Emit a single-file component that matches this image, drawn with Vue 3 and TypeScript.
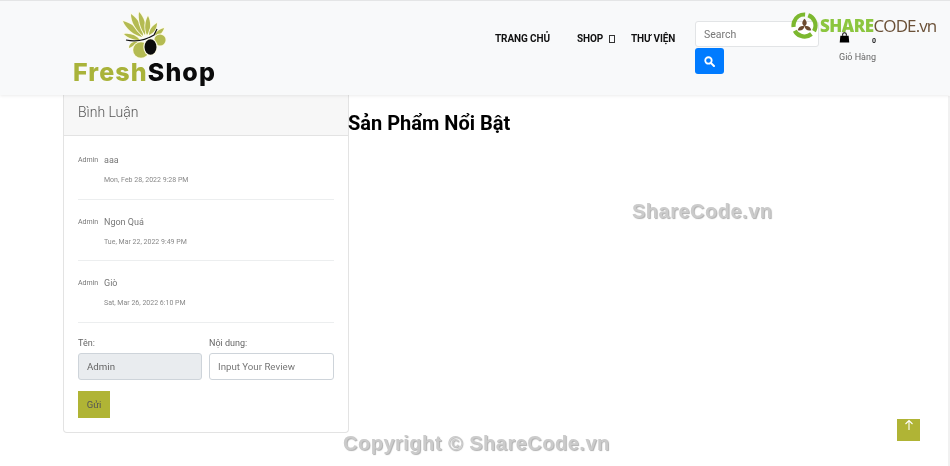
<template>
  <div class="page">
    <header class="top">
      <a class="brand">
        <svg class="brand-mark" viewBox="0 0 52 50" width="52" height="50">
          <g fill="#b4bb52" stroke="#fdfbe6" stroke-width="1.8" paint-order="stroke">
            <path d="M24 27 C16 25 8 19 5 11 C13 13 21 19 24 27 Z" />
            <path d="M25 26 C18 20 13 12 13 4 C20 9 25 17 25 26 Z" />
            <path d="M27 25 C22 18 20 9 21 2 C26 7 29 16 27 25 Z" />
            <path d="M29 25 C26 19 27 11 30 6 C33 12 33 20 29 25 Z" />
            <path d="M31 25 C31 20 34 16 39 13 C39 18 36 23 31 25 Z" />
            <path d="M22 30 C16 30 10 28 6 24 C12 23 18 25 22 30 Z" />
            <path d="M20 33 C17 34 14 37 11 38 C11 34 15 31 20 32 Z" />
            <path d="M37 24 C39 21 42 19 46 18 C45 22 42 25 38 26 Z" />
            <circle cx="42" cy="30" r="5.6" />
            <circle cx="23" cy="40" r="7.8" />
          </g>
          <path d="M8 30 C18 32 28 30 36 25 C37 23 38 21 39 19" fill="none" stroke="#111" stroke-width="1.2" />
          <ellipse cx="32.5" cy="37" rx="7.2" ry="9" fill="#fdfbe6" />
          <ellipse cx="32.5" cy="37" rx="6" ry="7.8" fill="#0c0c0c" />
        </svg>
        <span class="brand-name"><span class="fresh">Fresh</span>Shop</span>
      </a>
      <nav class="nav">
        <a class="nav-link home">TRANG CHỦ</a>
        <a class="nav-link shop">SHOP<i class="tofu"></i></a>
        <a class="nav-link lib">THƯ VIỆN</a>
      </nav>
      <form class="search" @submit.prevent>
        <input class="search-input" type="text" placeholder="Search" />
        <button class="search-btn" type="button" aria-label="Search">
          <svg viewBox="0 0 16 16" width="11" height="11">
            <circle cx="6.5" cy="6.5" r="4.7" fill="none" stroke="#fff" stroke-width="2.6" />
            <path d="M10 10 L14.5 14.5" stroke="#fff" stroke-width="3" stroke-linecap="round" />
          </svg>
        </button>
      </form>
      <div class="cart">
        <div class="cart-top">
          <svg viewBox="0 0 12 12" width="11" height="11">
            <path d="M4 4 V2.8 a2 2 0 0 1 4 0 V4" fill="none" stroke="#000" stroke-width="1.1" />
            <path d="M1.5 4 H10.5 L11.2 11.5 H0.8 Z" fill="#000" />
          </svg>
          <span class="cart-count">0</span>
        </div>
        <span class="cart-label">Giỏ Hàng</span>
      </div>
    </header>

    <main class="content">
      <section class="card">
        <div class="card-head">Bình Luận</div>
        <div class="card-body">
          <div v-for="c in comments" :key="c.date" class="comment">
            <span class="author">Admin</span>
            <div class="comment-main">
              <p class="comment-text">{{ c.text }}</p>
              <p class="comment-date">{{ c.date }}</p>
            </div>
          </div>
          <div class="form-row">
            <label class="field name-field">
              <span>Tên:</span>
              <input class="control" type="text" value="Admin" disabled />
            </label>
            <label class="field">
              <span>Nội dung:</span>
              <input class="control" type="text" placeholder="Input Your Review" />
            </label>
          </div>
          <button class="send" type="button">Gửi</button>
        </div>
      </section>
      <h2 class="featured">Sản Phẩm Nổi Bật</h2>
    </main>

    <div class="brand-stamp">
      <svg viewBox="0 0 28 28" width="27" height="27">
        <g fill="none" stroke="#7cb82f" stroke-width="4.4">
          <circle cx="14" cy="14" r="11.4" stroke-dasharray="20 3.9" transform="rotate(-70 14 14)" />
        </g>
        <path d="M14 7 C17 10 17 13 14 15 C11 13 11 10 14 7 Z" fill="#6b4a2f" />
        <path d="M7 19 C8 15 11 14 14 15 C13 18 11 20 7 19 Z" fill="#6b4a2f" />
        <path d="M21 19 C20 15 17 14 14 15 C15 18 17 20 21 19 Z" fill="#6b4a2f" />
      </svg>
      <span class="stamp-text"><b>SHARE</b>CODE.vn</span>
    </div>
    <span class="mark mark-mid">ShareCode.vn</span>
    <span class="mark mark-foot">Copyright © ShareCode.vn</span>
    <a class="to-top">
      <svg viewBox="0 0 12 12" width="12" height="12">
        <path d="M6 11 V1.5 M2.5 5 L6 1.5 L9.5 5" fill="none" stroke="#fff" stroke-width="1.1" />
      </svg>
    </a>
    <div class="scroll-rail"></div>
  </div>
</template>

<script setup lang="ts">
interface Comment {
  text: string;
  date: string;
}

const comments: Comment[] = [
  { text: 'aaa', date: 'Mon, Feb 28, 2022 9:28 PM' },
  { text: 'Ngon Quá', date: 'Tue, Mar 22, 2022 9:49 PM' },
  { text: 'Giò', date: 'Sat, Mar 26, 2022 6:10 PM' }
];
</script>

<style>
html,
body {
  margin: 0;
  background: #fff;
  overflow: hidden;
}
</style>

<style scoped>
.page {
  position: relative;
  width: 950px;
  height: 466px;
  overflow: hidden;
  will-change: transform;
  font-family: "Roboto", "Noto Sans", sans-serif;
  color: #666;
}

.top {
  position: relative;
  z-index: 2;
  box-sizing: border-box;
  height: 95px;
  display: flex;
  align-items: flex-start;
  background: #f8f9fa;
  border-top: 1px solid #e4e5e6;
  box-shadow: 0 1px 3px rgba(0, 0, 0, 0.08);
}

.brand {
  width: 422px;
  margin-left: 73px;
  display: flex;
  flex-direction: column;
  padding-top: 9px;
}

.brand-mark {
  margin-left: 45px;
}

.brand-name {
  font-family: "Inter", "Open Sans", sans-serif;
  font-weight: 800;
  font-size: 25px;
  line-height: 24px;
  letter-spacing: 1.1px;
  color: #0b0b0b;
}

.fresh {
  color: #a9b33a;
}

.nav {
  display: flex;
  padding-top: 31px;
}

.nav-link {
  font-size: 10px;
  line-height: 14px;
  font-weight: 700;
  letter-spacing: -0.1px;
  color: #111;
  white-space: nowrap;
}

.home {
  width: 82px;
}

.shop {
  width: 54px;
  display: flex;
  align-items: center;
}

.lib {
  width: 64px;
}

.tofu {
  box-sizing: border-box;
  width: 6px;
  height: 8px;
  margin-left: 6px;
  border: 1px solid #333;
}

.search {
  width: 124px;
  padding-top: 20px;
  display: flex;
  flex-direction: column;
  align-items: flex-start;
  gap: 1px;
}

.search-input {
  box-sizing: border-box;
  width: 124px;
  height: 26px;
  padding: 0 8px;
  font: 10.5px "Roboto", sans-serif;
  border: 1px solid #e2e4e6;
  border-radius: 3px;
  background: #fff;
  outline: none;
}

.search-input::placeholder {
  color: #777;
}

.search-btn {
  width: 29px;
  height: 26px;
  padding: 0;
  display: flex;
  align-items: center;
  justify-content: center;
  background: #007bff;
  border: 0;
  border-radius: 3px;
}

.cart {
  margin-left: 20px;
  padding-top: 31px;
  width: 37px;
  display: flex;
  flex-direction: column;
}

.cart-top {
  display: flex;
  justify-content: space-between;
  height: 16px;
}

.cart-count {
  font-size: 7px;
  font-weight: 700;
  line-height: 9px;
  padding-top: 5px;
  color: #222;
}

.cart-label {
  margin-top: 2px;
  font-size: 9px;
  line-height: 14px;
  color: #666;
  white-space: nowrap;
}

.content {
  display: flex;
  align-items: flex-start;
  padding-left: 63px;
}

.card {
  box-sizing: border-box;
  width: 286px;
  height: 338px;
  border: 1px solid #e3e3e3;
  border-top: 0;
  border-radius: 0 0 4px 4px;
}

.card-head {
  box-sizing: border-box;
  height: 41px;
  padding: 7px 14px 0;
  background: #f7f7f7;
  border-bottom: 1px solid #e3e3e3;
  font-size: 14px;
  line-height: 20px;
  font-weight: 300;
  color: #555;
}

.card-body {
  padding: 2px 14px 0;
}

.comment {
  box-sizing: border-box;
  height: 61.5px;
  display: flex;
  padding-top: 15px;
  border-bottom: 1px solid #eceeef;
}

.author {
  width: 26px;
  font-size: 7px;
  line-height: 14px;
  color: #777;
}

.comment-main p {
  margin: 0;
}

.comment-text {
  font-size: 9px;
  line-height: 14px;
  color: #777;
}

.comment-date {
  margin-top: 7px !important;
  font-size: 7px;
  line-height: 12px;
  color: #888;
}

.form-row {
  display: flex;
  gap: 7px;
  padding-top: 12px;
}

.field {
  flex: 1;
  min-width: 0;
  display: flex;
  flex-direction: column;
  font-size: 9px;
  line-height: 16px;
  color: #666;
}

.name-field {
  flex: none;
  width: 124px;
}

.control {
  box-sizing: border-box;
  width: 100%;
  height: 27px;
  margin-top: 2px;
  padding: 0 8px;
  font: 9.7px "Roboto", sans-serif;
  color: #666;
  background: #fff;
  border: 1px solid #ced4da;
  border-radius: 3px;
  outline: none;
}

.control:disabled {
  background: #e9ecef;
}

.control::placeholder {
  color: #777;
}

.send {
  display: block;
  width: 32px;
  height: 27px;
  margin-top: 11px;
  padding: 0;
  font: 9.5px "Roboto", sans-serif;
  color: #555;
  background: #b0b435;
  border: 0;
}

.featured {
  margin: 17px 0 0 -1px;
  font-size: 20px;
  line-height: 22px;
  font-weight: 700;
  color: #000;
  white-space: nowrap;
}

.brand-stamp {
  position: absolute;
  z-index: 3;
  left: 791px;
  top: 12px;
  display: flex;
  align-items: center;
  gap: 2px;
}

.stamp-text {
  font-family: "Open Sans", sans-serif;
  font-size: 17px;
  color: #6b5138;
  letter-spacing: -0.9px;
}

.stamp-text b {
  color: #8cc63f;
  font-weight: 800;
  letter-spacing: -0.5px;
}

.mark {
  position: absolute;
  z-index: 3;
  font-family: "Liberation Sans", sans-serif;
  font-weight: 700;
  font-size: 20px;
  line-height: 20px;
  letter-spacing: 0.5px;
  color: #cbcbcb;
  text-shadow: 1px 1px 1px #b0b0b0;
  white-space: nowrap;
}

.mark-mid {
  left: 632px;
  top: 201px;
}

.mark-foot {
  left: 343px;
  top: 433px;
}

.to-top {
  position: absolute;
  left: 897px;
  top: 419px;
  width: 23px;
  height: 22px;
  display: flex;
  justify-content: center;
  background: #b0b435;
}

.scroll-rail {
  position: absolute;
  top: 96px;
  right: 0;
  bottom: 0;
  width: 2px;
  background: #f1f1f1;
}
</style>
